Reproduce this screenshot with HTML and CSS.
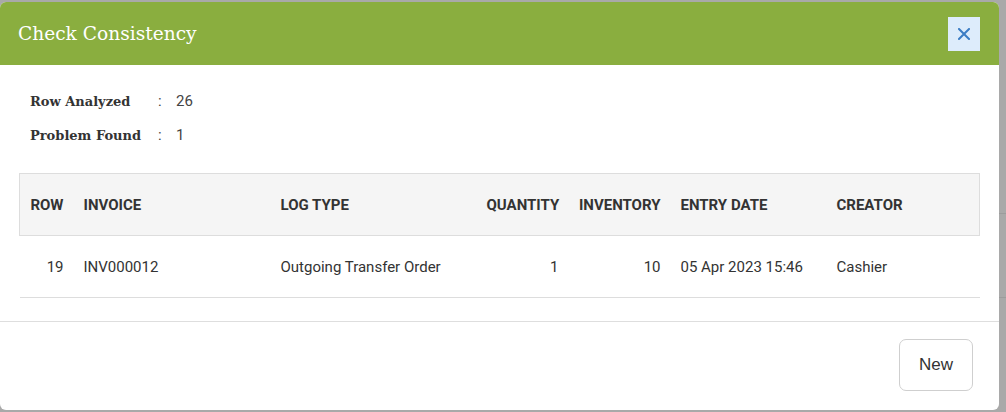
FILE: index.html
```html
<!DOCTYPE html>
<html>
<head>
<meta charset="utf-8">
<link rel="stylesheet" href="styles.css">
</head>
<body>
<div class="backdrop-lines"><span class="bl1"></span><span class="bl2"></span></div>
<div class="modal">
  <div class="modal-header">
    <h2 class="modal-title">Check Consistency</h2>
    <button class="close-btn" aria-label="Close">
      <svg width="12" height="12" viewBox="0 0 12 12"><path d="M1 1L11 11M11 1L1 11" stroke="#3b7dc4" stroke-width="2" stroke-linecap="square"/></svg>
    </button>
  </div>
  <div class="modal-body">
    <div class="stats">
      <div class="stat-label">Row Analyzed</div><div class="stat-colon">:</div><div class="stat-value">26</div>
      <div class="stat-label">Problem Found</div><div class="stat-colon">:</div><div class="stat-value">1</div>
    </div>
    <table class="grid">
      <colgroup>
        <col style="width:54px"><col style="width:197px"><col style="width:206px"><col style="width:92px"><col style="width:102px"><col style="width:156px"><col style="width:153px">
      </colgroup>
      <thead>
        <tr>
          <th class="num">ROW</th><th>INVOICE</th><th>LOG TYPE</th><th class="num">QUANTITY</th><th class="num">INVENTORY</th><th>ENTRY DATE</th><th>CREATOR</th>
        </tr>
      </thead>
      <tbody>
        <tr>
          <td class="num">19</td><td>INV000012</td><td>Outgoing Transfer Order</td><td class="num">1</td><td class="num">10</td><td>05 Apr 2023 15:46</td><td>Cashier</td>
        </tr>
      </tbody>
    </table>
  </div>
  <div class="modal-footer">
    <button class="btn">New</button>
  </div>
</div>
</body>
</html>
```
FILE: styles.css
```css
html, body {
  margin: 0;
  padding: 0;
  background: #a9a9a9;
  width: 1006px;
  height: 412px;
  overflow: hidden;
}
body {
  position: relative;
  padding-top: 2px;
  box-sizing: border-box;
  font-family: Roboto, "Liberation Sans", sans-serif;
}
.backdrop-lines span {
  position: absolute;
  left: 999px;
  width: 7px;
  height: 1px;
  background: #9c9c9c;
}
.bl1 { top: 213px; }
.bl2 { top: 297px; }
.modal {
  width: 999px;
  height: 408px;
  background: #fff;
  border-radius: 6px;
  overflow: hidden;
  display: flex;
  flex-direction: column;
}
.modal-header {
  height: 63px;
  background: #8aae3f;
  display: flex;
  align-items: center;
  justify-content: space-between;
  padding: 0 19px 0 18px;
  box-sizing: border-box;
  flex: none;
}
.modal-title {
  margin: 0;
  color: #fff;
  font-family: "Roboto Slab", "DejaVu Serif", serif;
  font-weight: normal;
  font-size: 18.6px;
}
.close-btn {
  width: 32px;
  height: 34px;
  border: none;
  background: #ddecfb;
  display: flex;
  align-items: center;
  justify-content: center;
  padding: 0;
}
.modal-body {
  flex: none;
  padding: 19px 20px 23px 19px;
  border-bottom: 1px solid #dedede;
}
.stats {
  display: grid;
  grid-template-columns: 128px 18px auto;
  grid-auto-rows: 34px;
  padding-left: 11px;
  align-items: center;
  margin-bottom: 21px;
}
.stat-label {
  font-family: "Roboto Slab", "DejaVu Serif", serif;
  font-weight: bold;
  font-size: 13px;
  color: #333;
}
.stat-colon, .stat-value {
  font-size: 15px;
  color: #444;
}
.grid {
  border-collapse: collapse;
  table-layout: fixed;
  width: 960px;
  font-size: 15px;
}
.grid th {
  background: #f5f5f5;
  border-top: 1px solid #ddd;
  border-bottom: 1px solid #ddd;
  height: 61px;
  padding: 0 10px;
  text-align: left;
  font-weight: bold;
  color: #333;
}
.grid thead tr th:first-child { border-left: 1px solid #ddd; }
.grid thead tr th:last-child { border-right: 1px solid #ddd; }
.grid td {
  height: 61px;
  padding: 0 10px;
  border-bottom: 1px solid #ddd;
  color: #333;
}
.grid .num { text-align: right; }
.modal-footer {
  flex: 1;
  display: flex;
  justify-content: flex-end;
  align-items: flex-start;
  padding: 17px 26px 0 0;
}
.btn {
  width: 74px;
  height: 52px;
  border: 1px solid #cfcfcf;
  border-radius: 7px;
  background: #fff;
  font-family: "Liberation Sans", Arial, sans-serif;
  font-size: 17px;
  color: #333;
}
```
